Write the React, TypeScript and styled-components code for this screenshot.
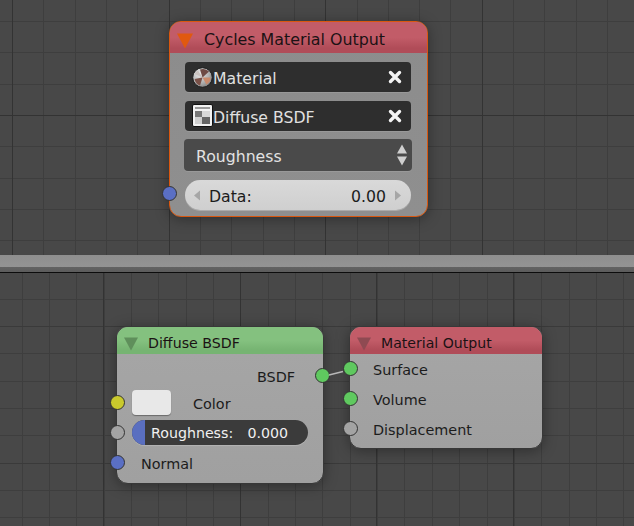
import React from 'react';
import styled, { createGlobalStyle } from 'styled-components';

const GlobalStyle = createGlobalStyle`
  html, body {
    margin: 0;
    padding: 0;
    background: #484848;
    overflow: hidden;
  }
  body {
    font-family: "DejaVu Sans", "Liberation Sans", sans-serif;
  }
`;

// one direction of grid lines, offset is the place of the first line
const gridLines = (angle: string, color: string, step: number, offset: number) => {
  const start = offset + 1 - step;
  return `repeating-linear-gradient(${angle}, transparent ${start}px, transparent ${offset}px, ${color} ${offset}px, ${color} ${offset + 1}px)`;
};

const MINOR = '#3e3e3e';
const MAJOR = '#333333';
const MAJOR_SOFT = '#3a3a3a';

const Page = styled.div`
  width: 634px;
  height: 526px;
  display: flex;
  flex-direction: column;
  overflow: hidden;
`;

const TopCanvas = styled.div`
  position: relative;
  height: 255px;
  flex: none;
  background-color: #484848;
  background-image: ${gridLines('90deg', MAJOR, 156.6, 12)}, ${gridLines('180deg', MAJOR, 156.6, 115)},
    ${gridLines('90deg', MINOR, 31.32, 12)}, ${gridLines('180deg', MINOR, 31.32, 21)};
`;

const BottomCanvas = styled.div`
  position: relative;
  flex: 1;
  background-color: #484848;
  background-image: ${gridLines('90deg', MAJOR, 136.75, 103)}, ${gridLines('180deg', MAJOR_SOFT, 136.75, 53)},
    ${gridLines('90deg', MINOR, 27.35, 21.6)}, ${gridLines('180deg', MINOR, 27.35, 25.6)};
`;

const Splitter = styled.div`
  flex: none;
  height: 18px;
  box-sizing: border-box;
  background: linear-gradient(#8f8f8f 0, #939393 12px, #626262 12px, #5c5c5c 17px);
  border-bottom: 1px solid #0c0c0c;
`;

const Node = styled.div<{ $x: number; $y: number; $w: number; $h: number; $selected?: boolean; $body: string }>`
  position: absolute;
  left: ${({ $x }) => $x}px;
  top: ${({ $y }) => $y}px;
  width: ${({ $w }) => $w}px;
  height: ${({ $h }) => $h}px;
  box-sizing: border-box;
  border-radius: 12px;
  background: ${({ $body }) => $body};
  border: 1px solid ${({ $selected }) => ($selected ? '#d9570f' : '#383838')};
  box-shadow: 0 2px 14px rgba(0, 0, 0, 0.35);
  display: flex;
  flex-direction: column;
`;

const NodeHeader = styled.div<{ $tall: number; $fontSize: number; $top: string; $bottom: string }>`
  flex: none;
  box-sizing: border-box;
  height: ${({ $tall }) => $tall}px;
  padding-top: 4px;
  display: flex;
  align-items: center;
  border-radius: 11px 11px 0 0;
  font-size: ${({ $fontSize }) => $fontSize}px;
  color: #1b1214;
  background: linear-gradient(${({ $top }) => $top} 0, ${({ $top }) => $top} 50%, ${({ $bottom }) => $bottom} 85%, ${({ $bottom }) => $bottom} 100%);
  white-space: nowrap;
`;

const Collapse = styled.svg<{ $left: number; $gap: number }>`
  flex: none;
  margin-left: ${({ $left }) => $left}px;
  margin-right: ${({ $gap }) => $gap}px;
  margin-top: 2px;
`;

const TopBody = styled.div`
  display: flex;
  flex-direction: column;
  padding: 9px 16px 0 15px;
  gap: 9px;
`;

const IdField = styled.div`
  position: relative;
  height: 30px;
  display: flex;
  align-items: center;
  padding: 0 9px 0 7px;
  border-radius: 4px;
  background: #2e2e2e;
  box-shadow: 0 1px 0 rgba(255, 255, 255, 0.1);
  color: #e0e0e0;
  font-size: 15.7px;
`;

const FieldName = styled.span`
  flex: 1;
  padding-top: 3px;
`;

const Dropdown = styled.div`
  height: 32px;
  margin: -1px -1px 0;
  display: flex;
  align-items: center;
  justify-content: space-between;
  padding: 0 5px 0 12px;
  border-radius: 4px;
  background: #4a4a4a;
  box-shadow: 0 1px 0 rgba(255, 255, 255, 0.1);
  color: #e2e2e2;
  font-size: 15.7px;
`;

const DropdownText = styled.span`
  padding-top: 3px;
`;

const DataField = styled.div`
  position: relative;
  height: 30px;
  display: flex;
  align-items: center;
  padding: 0 9px 0 8px;
  border-radius: 15px;
  background: linear-gradient(#d9d9d9, #cfcfcf);
  box-shadow: 0 1px 0 rgba(255, 255, 255, 0.25);
  color: #1c1c1c;
  font-size: 15.7px;
`;

const DataLabel = styled.span`
  margin-left: 8px;
  padding-top: 2px;
  flex: 1;
`;

const DataValue = styled.span`
  margin-right: 8px;
  padding-top: 2px;
`;

const SocketDot = styled.span<{ $color: string; $left?: number; $right?: number; $rise?: number }>`
  position: absolute;
  top: 50%;
  ${({ $left }) => ($left !== undefined ? `left: ${$left}px;` : '')}
  ${({ $right }) => ($right !== undefined ? `right: ${$right}px;` : '')}
  width: 15px;
  height: 15px;
  margin-top: ${({ $rise }) => -7.5 - ($rise ?? 0)}px;
  box-sizing: border-box;
  border-radius: 50%;
  border: 1px solid #333333;
  background: ${({ $color }) => $color};
`;

const BottomBody = styled.div<{ $shift: number }>`
  display: flex;
  flex-direction: column;
  margin-top: ${({ $shift }) => $shift}px;
  font-size: 14.4px;
  color: #1c1c1c;
`;

const SocketRow = styled.div<{ $tall: number; $inset: number; $end?: boolean }>`
  position: relative;
  height: ${({ $tall }) => $tall}px;
  display: flex;
  align-items: center;
  justify-content: ${({ $end }) => ($end ? 'flex-end' : 'flex-start')};
  padding-left: ${({ $inset }) => $inset}px;
  padding-right: ${({ $end }) => ($end ? 28 : 0)}px;
`;

const RowLabel = styled.span`
  padding-top: 3px;
`;

const Swatch = styled.div`
  width: 39px;
  height: 25px;
  border-radius: 4px;
  background: #e8e8e8;
  box-shadow: 0 1px 1px rgba(0, 0, 0, 0.35);
`;

const SwatchLabel = styled.span`
  margin-left: 22px;
  padding-top: 3px;
`;

const Slider = styled.div`
  width: 176px;
  height: 25px;
  border-radius: 13px;
  overflow: hidden;
  display: flex;
  align-items: center;
  background: #3b3b3b;
  color: #f0f0f0;
  font-size: 14.2px;
  box-shadow: 0 1px 1px rgba(255, 255, 255, 0.2);
`;

const SliderFill = styled.div`
  flex: none;
  width: 13px;
  height: 100%;
  background: #5a6fc0;
`;

const SliderLabel = styled.span`
  margin-left: 6px;
  padding-top: 1px;
  flex: 1;
`;

const SliderValue = styled.span`
  margin-right: 20px;
  padding-top: 1px;
`;

const LinkOverlay = styled.svg`
  position: absolute;
  left: 320px;
  top: 90px;
  pointer-events: none;
`;

const Triangle = ({ color, size, left, gap }: { color: string; size: number; left: number; gap: number }) => (
  <Collapse $left={left} $gap={gap} width={size} height={size} viewBox="0 0 14 14">
    <path d="M0 0.5H14L7 13.5Z" fill={color} />
  </Collapse>
);

const CloseIcon = () => (
  <svg width="14" height="14" viewBox="0 0 14 14">
    <path d="M2.5 2.5L11.5 11.5M11.5 2.5L2.5 11.5" stroke="#f4f4f4" strokeWidth="3.4" strokeLinecap="round" />
  </svg>
);

const MaterialIcon = () => (
  <svg width="21" height="21" viewBox="0 0 21 21" style={{ flex: 'none' }}>
    <defs>
      <radialGradient id="ballBase" cx="0.35" cy="0.3" r="0.8">
        <stop offset="0" stopColor="#ececec" />
        <stop offset="0.6" stopColor="#b0b0b0" />
        <stop offset="1" stopColor="#7a7a7a" />
      </radialGradient>
    </defs>
    <circle cx="10.5" cy="10.5" r="9.8" fill="url(#ballBase)" stroke="#1a1a1a" strokeWidth="1" />
    <path d="M10.5 10.5L17 4.5A9 9 0 0 0 8 2.5Z" fill="#6e4a44" />
    <path d="M10.5 10.5L18.6 10.5A8 8 0 0 1 14.5 17.4Z" fill="#c98a6c" />
    <path d="M10.5 10.5L8 18.4A8 8 0 0 1 2.6 12Z" fill="#7a5148" />
    <path d="M10.5 10.5L2.6 7A8 8 0 0 1 6 3.5Z" fill="#c9c2bf" />
  </svg>
);

const DiffuseIcon = () => (
  <svg width="21" height="23" viewBox="0 0 21 23" style={{ flex: 'none', marginTop: '-1px' }}>
    <rect x="0.5" y="0.5" width="20" height="22" rx="1.5" fill="#f2f2f2" stroke="#111" />
    <rect x="3" y="3" width="15" height="2" fill="#9a9a9a" />
    <rect x="3" y="7" width="7" height="6" fill="#777" />
    <rect x="10" y="7" width="8" height="6" fill="#d8d8d8" />
    <rect x="3" y="13" width="7" height="7" fill="#cfcfcf" />
    <rect x="10" y="13" width="8" height="7" fill="#666" />
  </svg>
);

const UpDownIcon = () => (
  <svg width="10" height="22" viewBox="0 0 10 22">
    <path d="M5 0.5L10 9.5H0Z M5 21.5L0 12.5H10Z" fill="#cfcfcf" />
  </svg>
);

const SideArrow = ({ dir }: { dir: 'left' | 'right' }) => (
  <svg width="8" height="11" viewBox="0 0 8 11">
    <path d={dir === 'left' ? 'M7 0.5V10.5L1 5.5Z' : 'M1 0.5V10.5L7 5.5Z'} fill="#a6a6a6" />
  </svg>
);

const GREEN = '#5fc95f';
const BLUE = '#5a6fc4';
const GREY = '#a3a3a3';
const YELLOW = '#c9c92c';
const BODY_LIGHT = 'linear-gradient(#a6a6a6, #a0a0a0)';
const BODY_DARK = 'linear-gradient(#8c8c8c, #8f8f8f)';

const App: React.FC = () => (
  <Page>
    <GlobalStyle />
    <TopCanvas>
      <Node $x={169} $y={21} $w={259} $h={196} $selected $body={BODY_DARK}>
        <NodeHeader $tall={31} $fontSize={15.85} $top="#c25c68" $bottom="#b04c58">
          <Triangle color="#e0590f" size={16} left={7} gap={11} />
          Cycles Material Output
        </NodeHeader>
        <TopBody>
          <IdField>
            <MaterialIcon />
            <FieldName>Material</FieldName>
            <CloseIcon />
          </IdField>
          <IdField>
            <DiffuseIcon />
            <FieldName>Diffuse BSDF</FieldName>
            <CloseIcon />
          </IdField>
          <Dropdown>
            <DropdownText>Roughness</DropdownText>
            <UpDownIcon />
          </Dropdown>
          <DataField>
            <SocketDot $color={BLUE} $left={-23} $rise={2} />
            <SideArrow dir="left" />
            <DataLabel>Data:</DataLabel>
            <DataValue>0.00</DataValue>
            <SideArrow dir="right" />
          </DataField>
        </TopBody>
      </Node>
    </TopCanvas>
    <Splitter />
    <BottomCanvas>
      <Node $x={116} $y={53} $w={208} $h={158} $body={BODY_LIGHT}>
        <NodeHeader $tall={27} $fontSize={14.2} $top="#84c17f" $bottom="#76b472">
          <Triangle color="#5f8f5b" size={14} left={7} gap={10} />
          Diffuse BSDF
        </NodeHeader>
        <BottomBody $shift={9}>
          <SocketRow $tall={24} $inset={0} $end>
            <RowLabel>BSDF</RowLabel>
            <SocketDot $color={GREEN} $right={-7} />
          </SocketRow>
          <SocketRow $tall={30} $inset={15}>
            <SocketDot $color={YELLOW} $left={-7} />
            <Swatch />
            <SwatchLabel>Color</SwatchLabel>
          </SocketRow>
          <SocketRow $tall={30} $inset={15}>
            <SocketDot $color={GREY} $left={-7} />
            <Slider>
              <SliderFill />
              <SliderLabel>Roughness:</SliderLabel>
              <SliderValue>0.000</SliderValue>
            </Slider>
          </SocketRow>
          <SocketRow $tall={30} $inset={24}>
            <SocketDot $color={BLUE} $left={-7} />
            <RowLabel>Normal</RowLabel>
          </SocketRow>
        </BottomBody>
      </Node>
      <Node $x={349} $y={53} $w={194} $h={123} $body={BODY_LIGHT}>
        <NodeHeader $tall={27} $fontSize={14.1} $top="#c25c68" $bottom="#b04c58">
          <Triangle color="#8f4a52" size={14} left={7} gap={10} />
          Material Output
        </NodeHeader>
        <BottomBody $shift={-1}>
          <SocketRow $tall={30} $inset={23}>
            <SocketDot $color={GREEN} $left={-7} />
            <RowLabel>Surface</RowLabel>
          </SocketRow>
          <SocketRow $tall={30} $inset={23}>
            <SocketDot $color={GREEN} $left={-7} />
            <RowLabel>Volume</RowLabel>
          </SocketRow>
          <SocketRow $tall={30} $inset={23}>
            <SocketDot $color={GREY} $left={-7} />
            <RowLabel>Displacement</RowLabel>
          </SocketRow>
        </BottomBody>
      </Node>
      <LinkOverlay width="32" height="20" viewBox="0 0 32 20">
        <path d="M9 12L23 8.5" stroke="#b8b8b8" strokeWidth="1.3" fill="none" />
      </LinkOverlay>
    </BottomCanvas>
  </Page>
);

export default App;
